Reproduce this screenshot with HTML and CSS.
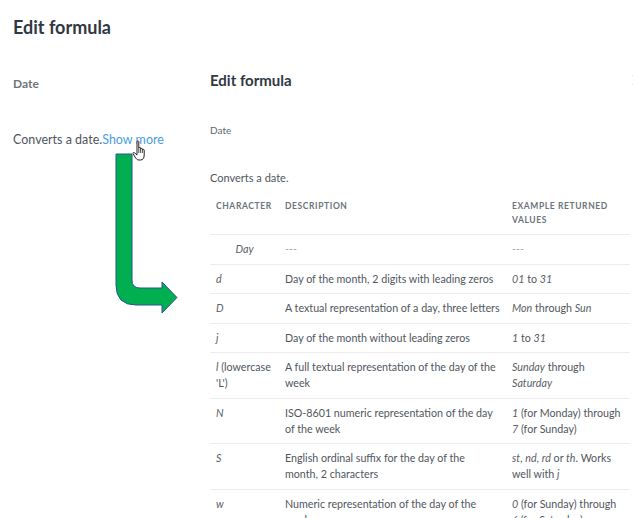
FILE: index.html
```html
<!DOCTYPE html>
<html lang="en">
<head>
    <meta charset="UTF-8">
    <meta name="viewport" content="width=device-width, initial-scale=1.0">
    <title>Edit formula</title>
    <link rel="stylesheet" href="styles.css">
</head>
<body>
    <div class="page">
        <!-- collapsed formula panel -->
        <div class="formula-panel">
            <h1>Edit formula</h1>
            <div class="fn-name">Date</div>
            <p class="fn-desc">Converts a date.<a href="#" class="show-more">Show more</a></p>
        </div>

        <!-- expanded formula panel -->
        <div class="formula-panel expanded">
            <div class="panel-head">
                <h2>Edit formula</h2>
                <svg class="close-icon" width="12" height="12" viewBox="0 0 12 12">
                    <path d="M1 1 L11 11 M11 1 L1 11" stroke="#6b7580" stroke-width="1.4" fill="none"/>
                </svg>
            </div>
            <div class="fn-name">Date</div>
            <p class="fn-desc">Converts a date.</p>

            <table class="format-table">
                <thead>
                    <tr>
                        <th class="col-char">Character</th>
                        <th class="col-desc">Description</th>
                        <th class="col-example">Example returned values</th>
                    </tr>
                </thead>
                <tbody>
                    <tr>
                        <td class="group"><em>Day</em></td>
                        <td class="muted">---</td>
                        <td class="muted">---</td>
                    </tr>
                    <tr>
                        <td><em>d</em></td>
                        <td>Day of the month, 2 digits with leading zeros</td>
                        <td><em>01</em> to <em>31</em></td>
                    </tr>
                    <tr>
                        <td><em>D</em></td>
                        <td>A textual representation of a day, three letters</td>
                        <td><em>Mon</em> through <em>Sun</em></td>
                    </tr>
                    <tr>
                        <td><em>j</em></td>
                        <td>Day of the month without leading zeros</td>
                        <td><em>1</em> to <em>31</em></td>
                    </tr>
                    <tr>
                        <td><em>l</em> (lowercase 'L')</td>
                        <td>A full textual representation of the day of the week</td>
                        <td><em>Sunday</em> through <em>Saturday</em></td>
                    </tr>
                    <tr>
                        <td><em>N</em></td>
                        <td>ISO-8601 numeric representation of the day of the week</td>
                        <td><em>1</em> (for Monday) through <em>7</em> (for Sunday)</td>
                    </tr>
                    <tr>
                        <td><em>S</em></td>
                        <td>English ordinal suffix for the day of the month, 2 characters</td>
                        <td><em>st</em>, <em>nd</em>, <em>rd</em> or <em>th</em>. Works well with <em>j</em></td>
                    </tr>
                    <tr>
                        <td><em>w</em></td>
                        <td>Numeric representation of the day of the week</td>
                        <td><em>0</em> (for Sunday) through <em>6</em> (for Saturday)</td>
                    </tr>
                </tbody>
            </table>
        </div>
    </div>

    <!-- callout arrow from "Show more" to the expanded panel -->
    <svg class="callout-arrow" width="633" height="518" viewBox="0 0 633 518">
        <path d="M116 154 H132 V280 Q132 288 140 288 H162 V282 L177 297.5 L162 313 V305 H136 Q116 305 116 285 Z"
              fill="#00b050" stroke="#2f528f" stroke-width="1"/>
    </svg>

    <!-- mouse pointer over the link -->
    <svg class="pointer" width="16" height="22" viewBox="0 0 16 22">
        <path d="M5 1.5 C5 0.7 6.8 0.7 6.8 1.5 V8 C6.8 7.2 8.6 7.2 8.6 8 V9 C8.6 8.2 10.4 8.2 10.4 9 V10 C10.4 9.2 12.2 9.2 12.2 10 V15 C12.2 18 11 20 8.5 20 H7 C5 20 4 18.5 3 17 L1 13.5 C0.6 12.7 1.8 12 2.5 12.8 L5 15 Z"
              fill="#fff" stroke="#222" stroke-width="1" stroke-linejoin="round"/>
        <path d="M6.8 8 V13 M8.6 9 V13 M10.4 10 V13" stroke="#222" stroke-width="0.8" fill="none"/>
    </svg>
</body>
</html>
```

FILE: styles.css
```css
* {
    margin: 0;
    padding: 0;
    box-sizing: border-box;
}

body {
    font-family: Lato, "Open Sans", sans-serif;
    background: #fff;
    color: #50565e;
    width: 633px;
    height: 518px;
    overflow: hidden;
    position: relative;
}

.page {
    display: flex;
    align-items: flex-start;
}

.formula-panel {
    width: 195px;
    flex-shrink: 0;
    padding: 16px 0 0 13px;
}

.formula-panel h1 {
    font-size: 18px;
    line-height: 22px;
    font-weight: 700;
    color: #313842;
}

.formula-panel .fn-name {
    margin-top: 38px;
    font-size: 12px;
    line-height: 16px;
    font-weight: 700;
    color: #6f757d;
}

.formula-panel .fn-desc {
    margin-top: 39px;
    font-size: 12.5px;
    line-height: 18px;
    color: #50565e;
}

.show-more {
    color: #4a9de6;
    text-decoration: none;
}

/* expanded version */
.formula-panel.expanded {
    width: auto;
    flex: 1;
    margin-top: 60px;
    padding: 10px 0 0 15px;
    background: #fff;
}

.panel-head {
    display: flex;
    justify-content: space-between;
    align-items: center;
    width: 430px;
}

.panel-head h2 {
    font-size: 15px;
    line-height: 20px;
    font-weight: 700;
    color: #313842;
}

.close-icon {
    margin-right: -4px;
}

.expanded .fn-name {
    margin-top: 32px;
    font-size: 10px;
    line-height: 16px;
    font-weight: 400;
    color: #5f656d;
}

.expanded .fn-desc {
    margin-top: 32px;
    font-size: 11px;
    line-height: 16px;
}

.format-table {
    margin-top: 8px;
    width: 420px;
    border-collapse: collapse;
    font-size: 10.7px;
    table-layout: fixed;
}

.format-table th {
    text-align: left;
    vertical-align: top;
    font-size: 8.5px;
    line-height: 14px;
    font-weight: 700;
    letter-spacing: 0.6px;
    text-transform: uppercase;
    color: #6b737c;
    padding: 5px 6px 7px;
    border-bottom: 1px solid #ececec;
}

.col-char {
    width: 69px;
}

.col-desc {
    width: 227px;
}

.format-table td {
    vertical-align: top;
    line-height: 16px;
    padding: 6.25px 6px;
    border-bottom: 1px solid #ececec;
    color: #50565e;
}

.format-table td em {
    color: #5a6068;
}

.format-table td.group {
    text-align: center;
}

.format-table td.muted {
    color: #a3a7ac;
}

.callout-arrow {
    position: absolute;
    left: 0;
    top: 0;
    pointer-events: none;
}

.pointer {
    position: absolute;
    left: 132px;
    top: 140px;
}
```
